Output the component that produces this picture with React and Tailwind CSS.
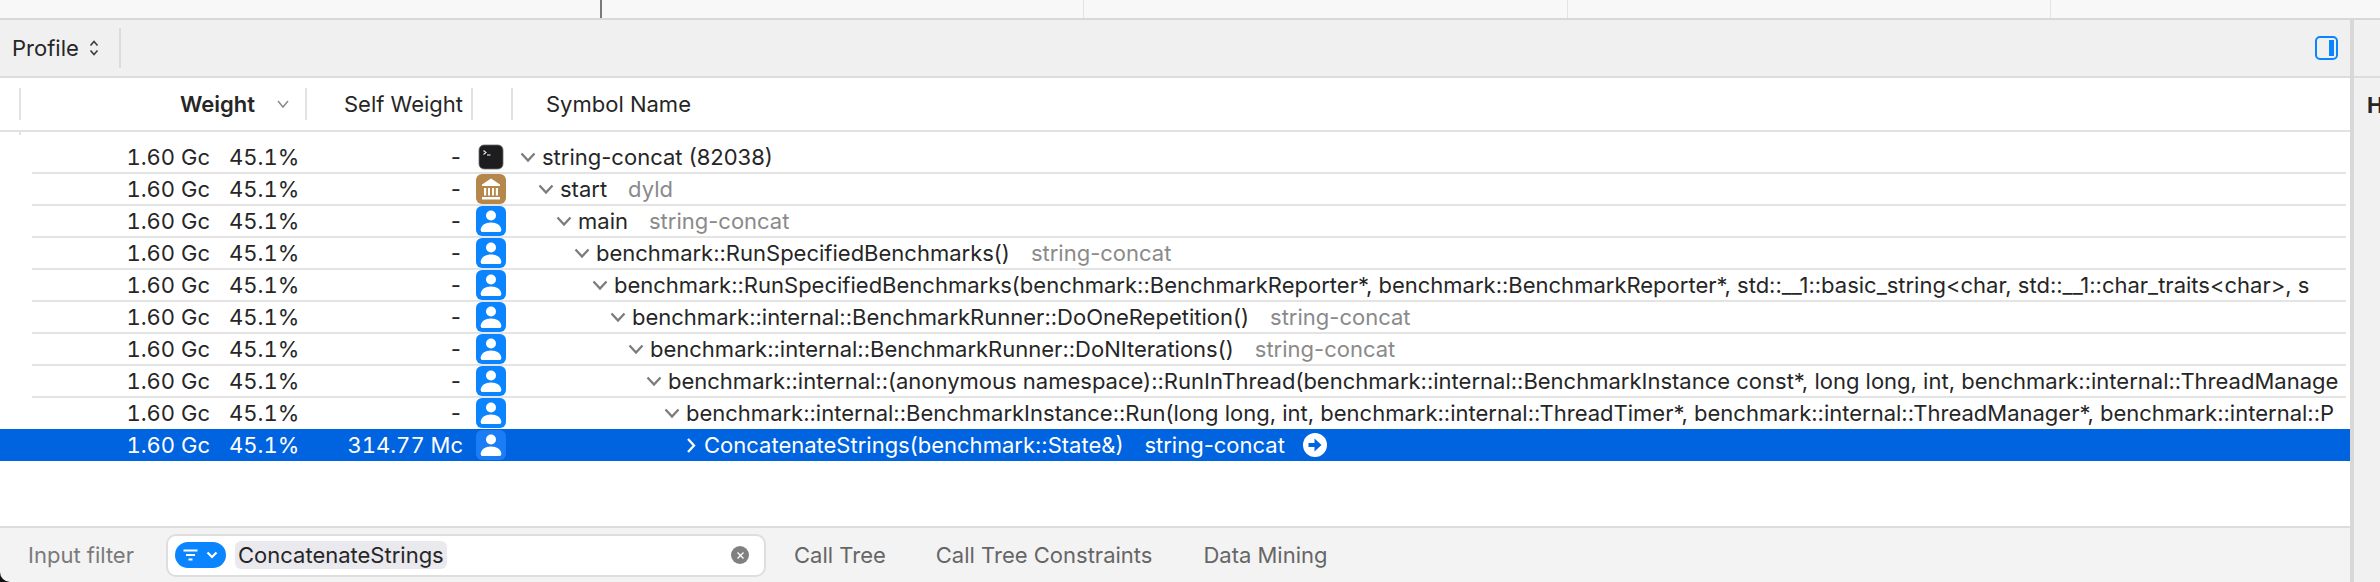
const rows = [
  { icon: "terminal", name: "string-concat (82038)" },
  { icon: "bank", name: "start", lib: "dyld" },
  { icon: "user", name: "main", lib: "string-concat" },
  { icon: "user", name: "benchmark::RunSpecifiedBenchmarks()", lib: "string-concat" },
  {
    icon: "user",
    name: "benchmark::RunSpecifiedBenchmarks(benchmark::BenchmarkReporter*, benchmark::BenchmarkReporter*, std::__1::basic_string<char, std::__1::char_traits<char>, s",
  },
  { icon: "user", name: "benchmark::internal::BenchmarkRunner::DoOneRepetition()", lib: "string-concat" },
  { icon: "user", name: "benchmark::internal::BenchmarkRunner::DoNIterations()", lib: "string-concat" },
  {
    icon: "user",
    name: "benchmark::internal::(anonymous namespace)::RunInThread(benchmark::internal::BenchmarkInstance const*, long long, int, benchmark::internal::ThreadManage",
  },
  {
    icon: "user",
    name: "benchmark::internal::BenchmarkInstance::Run(long long, int, benchmark::internal::ThreadTimer*, benchmark::internal::ThreadManager*, benchmark::internal::P",
  },
  { icon: "user", name: "ConcatenateStrings(benchmark::State&)", lib: "string-concat", selected: true, self: "314.77 Mc" },
];

const TerminalIcon = () => (
  <svg width="30" height="30" viewBox="0 0 30 30">
    <rect x="3" y="3" width="24" height="24" rx="5" fill="#1d1d1f" stroke="#6b6b6b" strokeWidth="0.8" />
    <path d="M7.500 8.500l2.500 2-2.500 2" fill="none" stroke="#e8e8e8" strokeWidth="1.100" />
    <path d="M11 13h3.500" stroke="#e8e8e8" strokeWidth="1.100" />
  </svg>
);

const BankIcon = () => (
  <svg width="30" height="30" viewBox="0 0 30 30">
    <rect width="30" height="30" rx="6" fill="#b5874a" />
    <path d="M15 4.500L6 10.500v1.500h18v-1.500z" fill="#fff" />
    <path d="M8 14h2.200v7.500H8zM12 14h2v7.500h-2zM16 14h2v7.500h-2zM19.800 14H22v7.500h-2.200z" fill="#fff" />
    <rect x="6" y="23" width="18" height="2.500" fill="#fff" />
  </svg>
);

const UserIcon = ({ selected }) => (
  <svg width="30" height="30" viewBox="0 0 30 30">
    <rect width="30" height="30" rx="6" fill={selected ? "#1a7df5" : "#0a84ff"} />
    <circle cx="15" cy="9.500" r="5" fill="#fff" />
    <path d="M4.700 24c0-4.500 4.500-7.500 10.300-7.500s10.300 3 10.300 7.500c0 1.500-1 2-2 2H6.700c-1 0-2-.5-2-2z" fill="#fff" />
  </svg>
);

const Disclosure = ({ open }) => (
  <svg width="16" height="16" viewBox="0 0 16 16" className="shrink-0">
    {open ? (
      <path d="M1.500 4.500L8 11.500l6.500-7" fill="none" stroke="#7c7c7c" strokeWidth="2.300" />
    ) : (
      <path d="M6 2l6 6.500L6 15" fill="none" stroke="#fff" strokeWidth="2.300" />
    )}
  </svg>
);

const Row = ({ row, depth }) => {
  const { selected } = row;
  return (
    <div className={`relative flex h-8 items-center ${selected ? "bg-[#0064e1] text-white" : "text-[#262626]"}`}>
      <div className="w-[210px] shrink-0 text-right tabular-nums">1.60 Gc</div>
      <div className="ml-[19px] w-[68px] shrink-0 tabular-nums">45.1%</div>
      <div className="w-[166px] shrink-0 text-right tabular-nums">{row.self || "-"}</div>
      <div className="ml-[13px] flex w-[30px] shrink-0 items-center justify-center">
        {row.icon === "terminal" && <TerminalIcon />}
        {row.icon === "bank" && <BankIcon />}
        {row.icon === "user" && <UserIcon selected={selected} />}
      </div>
      <div className="mr-1 flex min-w-0 flex-1 items-center overflow-hidden whitespace-nowrap">
        <div className="w-[14px] shrink-0" style={{ marginLeft: depth * 18 }} />
        <Disclosure open={!selected} />
        <span className="ml-[6px]">{row.name}</span>
        {row.lib && (
          <span className={`ml-[21px] ${selected ? "text-white" : "text-[#8a8a8a]"}`}>{row.lib}</span>
        )}
        {selected && (
          <svg width="24" height="24" viewBox="0 0 24 24" className="ml-[18px] shrink-0">
            <circle cx="12" cy="12" r="12" fill="#fff" />
            <path d="M5.500 10h6V5.500l7 6.500-7 6.500V14h-6z" fill="#0064e1" />
          </svg>
        )}
      </div>
    </div>
  );
};

export default function App() {
  return (
    <div className="relative flex h-[582px] w-[2380px] flex-col overflow-hidden bg-white font-['Inter',sans-serif] text-[22px]">
      <div className="flex h-5 shrink-0 border-b-2 border-[#d8d8d8] bg-[#f8f8f8]">
        <div className="ml-[600px] h-full w-0.5 bg-[#7a7a7a]" />
        <div className="ml-[481px] h-full w-px bg-[#e4e4e4]" />
        <div className="ml-[483px] h-full w-px bg-[#e4e4e4]" />
        <div className="ml-[482px] h-full w-px bg-[#e4e4e4]" />
      </div>
      <div className="flex min-h-0 flex-1">
        <div className="flex min-w-0 flex-1 flex-col">
          <div className="flex h-[58px] shrink-0 items-center border-b-2 border-[#dcdcdc] bg-[#f0f0f0] pr-3">
            <span className="ml-3 w-[66px] text-[#262626]">Profile</span>
            <svg width="12" height="18" viewBox="0 0 12 18" className="ml-[10px]">
              <path d="M2.500 6.500L6 2.500l3.500 4M2.500 11.500L6 15.500l3.500-4" fill="none" stroke="#3c3c3c" strokeWidth="1.600" />
            </svg>
            <div className="ml-[19px] h-10 w-0.5 bg-[#dcdcdc]" />
            <div className="ml-auto flex h-6 w-[23px] items-center justify-end rounded-[5px] border-2 border-[#0a84ff] pr-[2px]">
              <div className="h-4 w-[5px] bg-[#0a84ff]" />
            </div>
          </div>
          <div className="flex h-[54px] shrink-0 items-center border-b-2 border-[#e2e2e2] text-[#262626]">
            <div className="ml-[19px] h-8 w-0.5 bg-[#e2e2e2]" />
            <span className="w-[234px] text-right font-semibold">Weight</span>
            <svg width="14" height="10" viewBox="0 0 14 10" className="ml-[21px]">
              <path d="M2 2l5 6 5-6" fill="none" stroke="#8a8a8a" strokeWidth="1.500" />
            </svg>
            <div className="ml-[15px] h-8 w-0.5 bg-[#e2e2e2]" />
            <span className="w-[156px] text-right">Self Weight</span>
            <div className="ml-2 h-8 w-0.5 bg-[#e2e2e2]" />
            <div className="ml-[38px] h-8 w-0.5 bg-[#e2e2e2]" />
            <span className="ml-[33px]">Symbol Name</span>
          </div>
          <div className="relative min-h-0 flex-1 pt-[9px]">
            <div className="absolute left-[19px] top-0 h-[3px] w-0.5 bg-[#e2e2e2]" />
            {rows.map((row, i) => (
              <div key={i} className="relative">
                {i < 8 && <div className="absolute bottom-[-1px] left-8 right-1 h-0.5 bg-[#e4e4e4]" />}
                <Row row={row} depth={i} />
              </div>
            ))}
          </div>
          <div className="flex h-14 shrink-0 items-center border-t-2 border-[#dcdcdc] bg-[#f3f3f3]">
            <span className="ml-7 w-[138px] text-[#7a7a7a]">Input filter</span>
            <div className="flex h-[43px] w-[600px] shrink-0 items-center rounded-[10px] border-2 border-[#dedede] bg-white pl-[7px] pr-[15px]">
              <div className="flex h-[26px] w-[51px] items-center justify-center gap-2 rounded-full bg-[#0a84ff]">
                <svg width="15" height="14" viewBox="0 0 15 14">
                  <path d="M0.500 2.500h14M3 7h9M5.500 11.500h4" stroke="#fff" strokeWidth="2" />
                </svg>
                <svg width="12" height="10" viewBox="0 0 12 10">
                  <path d="M1.500 2.500L6 7l4.500-4.500" fill="none" stroke="#fff" strokeWidth="2.200" />
                </svg>
              </div>
              <span className="ml-[9px] flex h-7 items-center rounded-md bg-[#e9e9ee] px-[3px] text-[#262626]">
                ConcatenateStrings
              </span>
              <div className="ml-auto flex h-[18px] w-[18px] items-center justify-center rounded-full bg-[#808080]">
                <svg width="9" height="9" viewBox="0 0 9 9">
                  <path d="M1.500 1.500l6 6M7.500 1.500l-6 6" stroke="#fff" strokeWidth="1.300" />
                </svg>
              </div>
            </div>
            <span className="ml-7 text-[#666]">Call Tree</span>
            <span className="ml-[50px] text-[#666]">Call Tree Constraints</span>
            <span className="ml-[51px] text-[#666]">Data Mining</span>
          </div>
        </div>
        <div className="flex w-[30px] shrink-0 flex-col border-l-4 border-[#d8d8d8] bg-[#f1f1f1]">
          <div className="h-[58px] shrink-0 border-b-2 border-[#dcdcdc]" />
          <div className="mt-[11px] pl-[13px] font-bold text-[#262626]">H</div>
        </div>
      </div>
      <div className="absolute bottom-0 left-0 h-[10px] w-[10px] bg-[#111]">
        <div className="h-full w-full rounded-bl-[10px] bg-[#f3f3f3]" />
      </div>
    </div>
  );
}
